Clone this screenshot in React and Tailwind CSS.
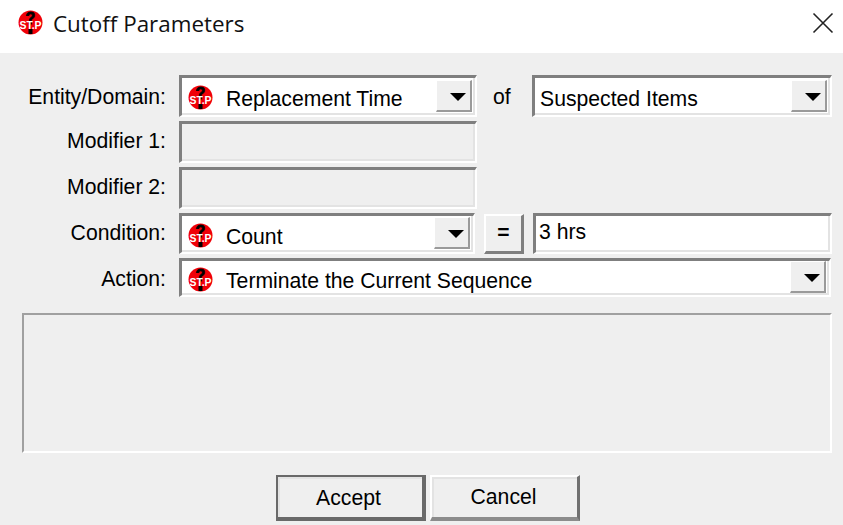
import React from "react";

const StopIcon = ({ size = 25 }) => (
  <svg width={size} height={size} viewBox="0 0 25 25" className="shrink-0">
    <circle cx="12.5" cy="12.5" r="12" fill="#f00008" />
    <text x="12.5" y="14" textAnchor="middle" fontSize="16" fontWeight="700" stroke="#000" strokeWidth="0.8" fontFamily="Liberation Sans, sans-serif" fill="#000">?</text>
    <text x="12.5" y="18.5" textAnchor="middle" fontSize="11" fontWeight="700" textLength="22" lengthAdjust="spacingAndGlyphs" fontFamily="Liberation Sans, sans-serif" fill="#fff">ST.P</text>
    <rect x="10.5" y="19" width="4" height="5" fill="#000" />
  </svg>
);

const Sunken = ({ className = "", children }) => (
  <div className={`border-t-[3px] border-l-[3px] border-r-2 border-b-2 border-t-[#7f7f7f] border-l-[#7f7f7f] border-r-white border-b-white ${className}`}>
    <div className="flex h-full items-center border-r-2 border-b-2 border-[#e3e3e3]">{children}</div>
  </div>
);

const Arrow = () => (
  <div className="ml-auto mr-[1px] flex h-[32px] w-[36px] shrink-0 items-center justify-center border-t border-l border-white border-r-2 border-b-2 border-r-[#9a9a9a] border-b-[#9a9a9a] bg-[#efefef] pl-[8px] pt-[3px]">
    <div className="h-0 w-0 border-x-[8px] border-t-[8px] border-x-transparent border-t-black" />
  </div>
);

const Combo = ({ text, icon, className = "" }) => (
  <Sunken className={`bg-white ${className}`}>
    {icon && <div className="ml-[6px] mr-[13px] flex pt-[4px]"><StopIcon /></div>}
    <span className={`pt-[7px] text-[21.2px] text-black ${icon ? "" : "ml-[5px]"}`}>{text}</span>
    <Arrow />
  </Sunken>
);

const Row = ({ label, children, labelClass = "pb-[2px]" }) => (
  <div className="flex items-center">
    <div className={`w-[166px] text-right text-[21.2px] text-black ${labelClass}`}>{label}</div>
    <div className="ml-[13px] flex flex-1 items-center">{children}</div>
  </div>
);

export default function App() {
  return (
    <div className="flex h-[525px] w-[843px] flex-col overflow-hidden bg-[#efefef] font-['Liberation_Sans',Arial,sans-serif]">
      {/* title bar */}
      <div className="flex h-[53px] items-center bg-white pb-[5px] pl-[18px] pr-[9px]">
        <div className="mb-[3px] flex"><StopIcon size={25} /></div>
        <span className="ml-[10px] font-['Open_Sans',sans-serif] text-[22.4px] text-[#111]">Cutoff Parameters</span>
        <svg width="22" height="22" viewBox="0 0 22 22" className="ml-auto mb-[3px]">
          <path d="M1.5 1.5 L20.5 20.5 M20.5 1.5 L1.5 20.5" stroke="#222" strokeWidth="1.6" fill="none" />
        </svg>
      </div>

      <div className="mt-[22px] flex flex-col gap-[4px]">
        <Row label="Entity/Domain:" labelClass="pt-[2px]">
          <Combo icon text="Replacement Time" className="h-[42px] w-[298px]" />
          <span className="ml-[16px] w-[39px] pt-[2px] text-[21.2px] text-black">of</span>
          <Combo text="Suspected Items" className="h-[42px] w-[300px]" />
        </Row>
        <Row label="Modifier 1:">
          <Sunken className="h-[42px] w-[298px]" />
        </Row>
        <Row label="Modifier 2:">
          <Sunken className="h-[42px] w-[298px]" />
        </Row>
        <Row label="Condition:">
          <Combo icon text="Count" className="h-[41px] w-[296px]" />
          <button className="ml-[9px] h-[40px] w-[40px] border-t-2 border-l-2 border-white border-r-[3px] border-b-[3px] border-r-[#7f7f7f] border-b-[#7f7f7f] pb-[2px] text-[21px] font-bold text-black">=</button>
          <Sunken className="ml-[9px] h-[41px] w-[299px] bg-white">
            <span className="ml-[3px] pb-[3px] text-[21.2px] text-black">3 hrs</span>
          </Sunken>
        </Row>
        <Row label="Action:" labelClass="pt-[2px]">
          <Combo icon text="Terminate the Current Sequence" className="h-[39px] w-[652px]" />
        </Row>
      </div>

      <div className="ml-[22px] mt-[16px] h-[140px] w-[810px] border-t-2 border-l-2 border-[#a0a0a0] border-r-2 border-b-2 border-r-white border-b-white" />

      <div className="ml-[276px] mt-[22px] flex gap-[4px]">
        <button className="h-[46px] w-[150px] border-2 border-[#696969] border-b-[4px] border-r-[4px] text-[21.2px] text-black">
          <span className="flex h-full items-center justify-center border-t-2 border-l-2 border-[#e3e3e3] pr-[5px]">Accept</span>
        </button>
        <button className="h-[46px] w-[150px] border-t-2 border-l-2 border-white border-r-[3px] border-b-[4px] border-r-[#707070] border-b-[#8c8c8c] text-[21.2px] text-black">
          <span className="flex h-full items-center justify-center border-t-2 border-l-2 border-[#e3e3e3] pb-[2px] pr-[4px]">Cancel</span>
        </button>
      </div>
    </div>
  );
}
